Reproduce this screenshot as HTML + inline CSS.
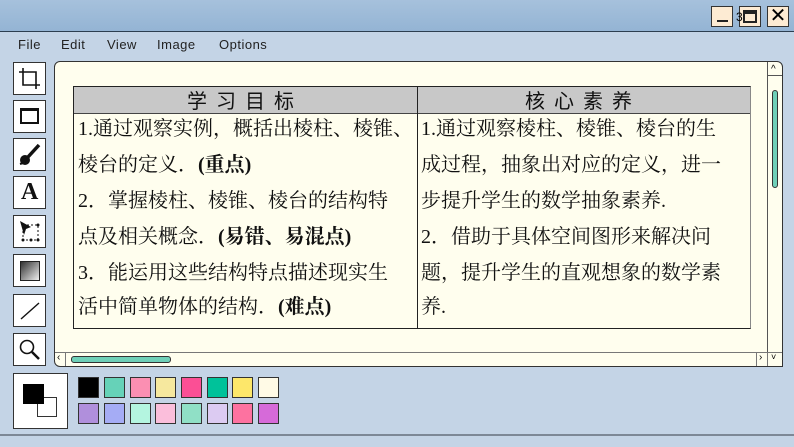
<!DOCTYPE html>
<html><head><meta charset="utf-8"><style>
*{margin:0;padding:0;box-sizing:border-box}
body{width:794px;height:447px;overflow:hidden;background:#c4d4e6;position:relative;font-family:"Liberation Sans","DejaVu Sans",sans-serif}
.a{position:absolute}
.title{left:0;top:0;width:794px;height:32px;background:linear-gradient(#a6c1dc,#94b4d4);border-bottom:1px solid #2c3e50}
.wb{top:6px;width:22px;height:21px;background:#fdebd3;border:1px solid #333}
.menu span{position:absolute;top:37px;font-size:13px;color:#222;letter-spacing:.5px}
.tool{left:13px;width:33px;height:33px;background:#fff;border:1px solid #333}
.canvas{left:54px;top:61px;width:729px;height:306px;background:#fffeee;border:1px solid #333;border-radius:6px 6px 0 6px}
.t{font-family:"Liberation Serif","Noto Serif CJK SC",serif;font-size:20px;color:#111;white-space:nowrap;line-height:20px}
.sw{width:21px;height:21px;border:1px solid #333}
</style></head><body>
<div class="a title"></div>
<div class="a wb" style="left:711px"><div class="a" style="left:5px;top:13px;width:11px;height:2px;background:#222"></div></div>
<div class="a wb" style="left:739px"><div class="a" style="left:3px;top:3px;width:14px;height:13px;border:2px solid #222;border-top-width:4px"></div><span class="a" style="left:-4px;top:3px;font-size:12px">3</span></div>
<div class="a wb" style="left:767px;font-size:20px;line-height:18px;text-align:center">✕</div>
<div class="menu"><span style="left:18px">File</span><span style="left:61px">Edit</span><span style="left:107px">View</span><span style="left:157px">Image</span><span style="left:219px">Options</span></div>

<div class="a tool" style="top:62px"><svg width="31" height="31"><path d="M9 5V22H26M5 9H22V26" fill="none" stroke="#111" stroke-width="1.6"/></svg></div>
<div class="a tool" style="top:100px"><svg width="31" height="31"><rect x="7" y="8" width="17" height="14" fill="none" stroke="#111" stroke-width="2"/><rect x="7" y="7" width="17" height="3" fill="#111"/></svg></div>
<div class="a tool" style="top:138px"><svg width="31" height="31"><path d="M25 6L14 18" stroke="#111" stroke-width="3.5"/><circle cx="11" cy="21" r="5" fill="#111"/><path d="M6 25l3-1" stroke="#111" stroke-width="2"/></svg></div>
<div class="a tool" style="top:176px"><div class="a t" style="left:7px;top:5px;font-size:24px;font-weight:bold">A</div></div>
<div class="a tool" style="top:215px"><svg width="31" height="31"><rect x="9" y="9" width="15" height="15" fill="none" stroke="#111" stroke-dasharray="2 2"/><path d="M6 5L17 11 12 13 10 19Z" fill="#111"/><g fill="#111"><circle cx="24" cy="9" r="1.5"/><circle cx="9" cy="24" r="1.5"/><circle cx="24" cy="24" r="1.5"/><circle cx="17" cy="24" r="1.5"/></g></svg></div>
<div class="a tool" style="top:254px"><div class="a" style="left:6px;top:6px;width:20px;height:20px;border:1px solid #222;background:linear-gradient(135deg,#333,#eee)"></div></div>
<div class="a tool" style="top:294px"><svg width="31" height="31"><path d="M7 24L25 8" stroke="#111" stroke-width="1.4"/></svg></div>
<div class="a tool" style="top:333px"><svg width="31" height="31"><circle cx="13" cy="13" r="6.5" fill="none" stroke="#111" stroke-width="1.6"/><path d="M18 18l7 7" stroke="#111" stroke-width="2.5"/></svg></div>

<div class="a canvas"></div>
<div class="a" style="left:767px;top:62px;width:15px;height:290px;border-left:1px solid #555"></div>
<div class="a" style="left:771px;top:64px;font-size:10px">^</div>
<div class="a" style="left:768px;top:75px;width:14px;border-top:1px solid #555"></div>
<div class="a" style="left:772px;top:90px;width:6px;height:98px;background:#6fd0b8;border:1px solid #333;border-radius:3px"></div>
<div class="a" style="left:55px;top:352px;width:727px;border-top:1px solid #777"></div>
<div class="a" style="left:65px;top:352px;height:14px;border-left:1px solid #777"></div>
<div class="a" style="left:57px;top:352px;font-size:10px">‹</div>
<div class="a" style="left:756px;top:352px;height:14px;border-left:1px solid #777"></div>
<div class="a" style="left:767px;top:352px;height:14px;border-left:1px solid #777"></div>
<div class="a" style="left:759px;top:352px;font-size:10px">›</div>
<div class="a" style="left:771px;top:352px;font-size:9px">˅</div>
<div class="a" style="left:71px;top:356px;width:100px;height:7px;background:#6fd0b8;border:1px solid #333;border-radius:3px"></div>

<div class="a" style="left:73px;top:86px;width:678px;height:243px;border:1px solid #222;border-right-color:#888"></div>
<div class="a" style="left:74px;top:87px;width:676px;height:27px;background:#c8c8c8;border-bottom:1px solid #444"></div>
<div class="a" style="left:417px;top:87px;height:241px;border-left:1px solid #222"></div>
<div class="a t" style="left:187px;top:90px;font-family:'Noto Sans CJK SC',sans-serif;letter-spacing:9px">学习目标</div>
<div class="a t" style="left:525px;top:90px;font-family:'Noto Sans CJK SC',sans-serif;letter-spacing:9px">核心素养</div>

<div class="a t" style="left:78px;top:119px">1.通过观察实例，概括出棱柱、棱锥、</div>
<div class="a t" style="left:78px;top:155px">棱台的定义．<b>(重点)</b></div>
<div class="a t" style="left:78px;top:191px">2．掌握棱柱、棱锥、棱台的结构特</div>
<div class="a t" style="left:78px;top:227px">点及相关概念．<b>(易错、易混点)</b></div>
<div class="a t" style="left:78px;top:263px">3．能运用这些结构特点描述现实生</div>
<div class="a t" style="left:78px;top:297px">活中简单物体的结构．<b>(难点)</b></div>

<div class="a t" style="left:421px;top:119px">1.通过观察棱柱、棱锥、棱台的生</div>
<div class="a t" style="left:421px;top:155px">成过程，抽象出对应的定义，进一</div>
<div class="a t" style="left:421px;top:191px">步提升学生的数学抽象素养.</div>
<div class="a t" style="left:421px;top:227px">2．借助于具体空间图形来解决问</div>
<div class="a t" style="left:421px;top:263px">题，提升学生的直观想象的数学素</div>
<div class="a t" style="left:421px;top:297px">养.</div>

<div class="a" style="left:13px;top:373px;width:55px;height:56px;background:#fff;border:1px solid #333"></div>
<div class="a" style="left:37px;top:397px;width:20px;height:20px;background:#fff;border:1px solid #333"></div>
<div class="a" style="left:23px;top:384px;width:21px;height:20px;background:#000"></div>
<div class="a sw" style="left:78px;top:377px;background:#000"></div>
<div class="a sw" style="left:104px;top:377px;background:#66d2b8"></div>
<div class="a sw" style="left:130px;top:377px;background:#fb8fb2"></div>
<div class="a sw" style="left:155px;top:377px;background:#f6e89e"></div>
<div class="a sw" style="left:181px;top:377px;background:#fb4f95"></div>
<div class="a sw" style="left:207px;top:377px;background:#00c29a"></div>
<div class="a sw" style="left:232px;top:377px;background:#fde76a"></div>
<div class="a sw" style="left:258px;top:377px;background:#fffae6"></div>
<div class="a sw" style="left:78px;top:403px;background:#b08fdc"></div>
<div class="a sw" style="left:104px;top:403px;background:#a5acf5"></div>
<div class="a sw" style="left:130px;top:403px;background:#b4f5e0"></div>
<div class="a sw" style="left:155px;top:403px;background:#fbbedb"></div>
<div class="a sw" style="left:181px;top:403px;background:#90e0c6"></div>
<div class="a sw" style="left:207px;top:403px;background:#dccbf2"></div>
<div class="a sw" style="left:232px;top:403px;background:#fd72a0"></div>
<div class="a sw" style="left:258px;top:403px;background:#d66ad9"></div>
<div class="a" style="left:0;top:434px;width:794px;border-top:2px solid #7d8896"></div>
</body></html>
